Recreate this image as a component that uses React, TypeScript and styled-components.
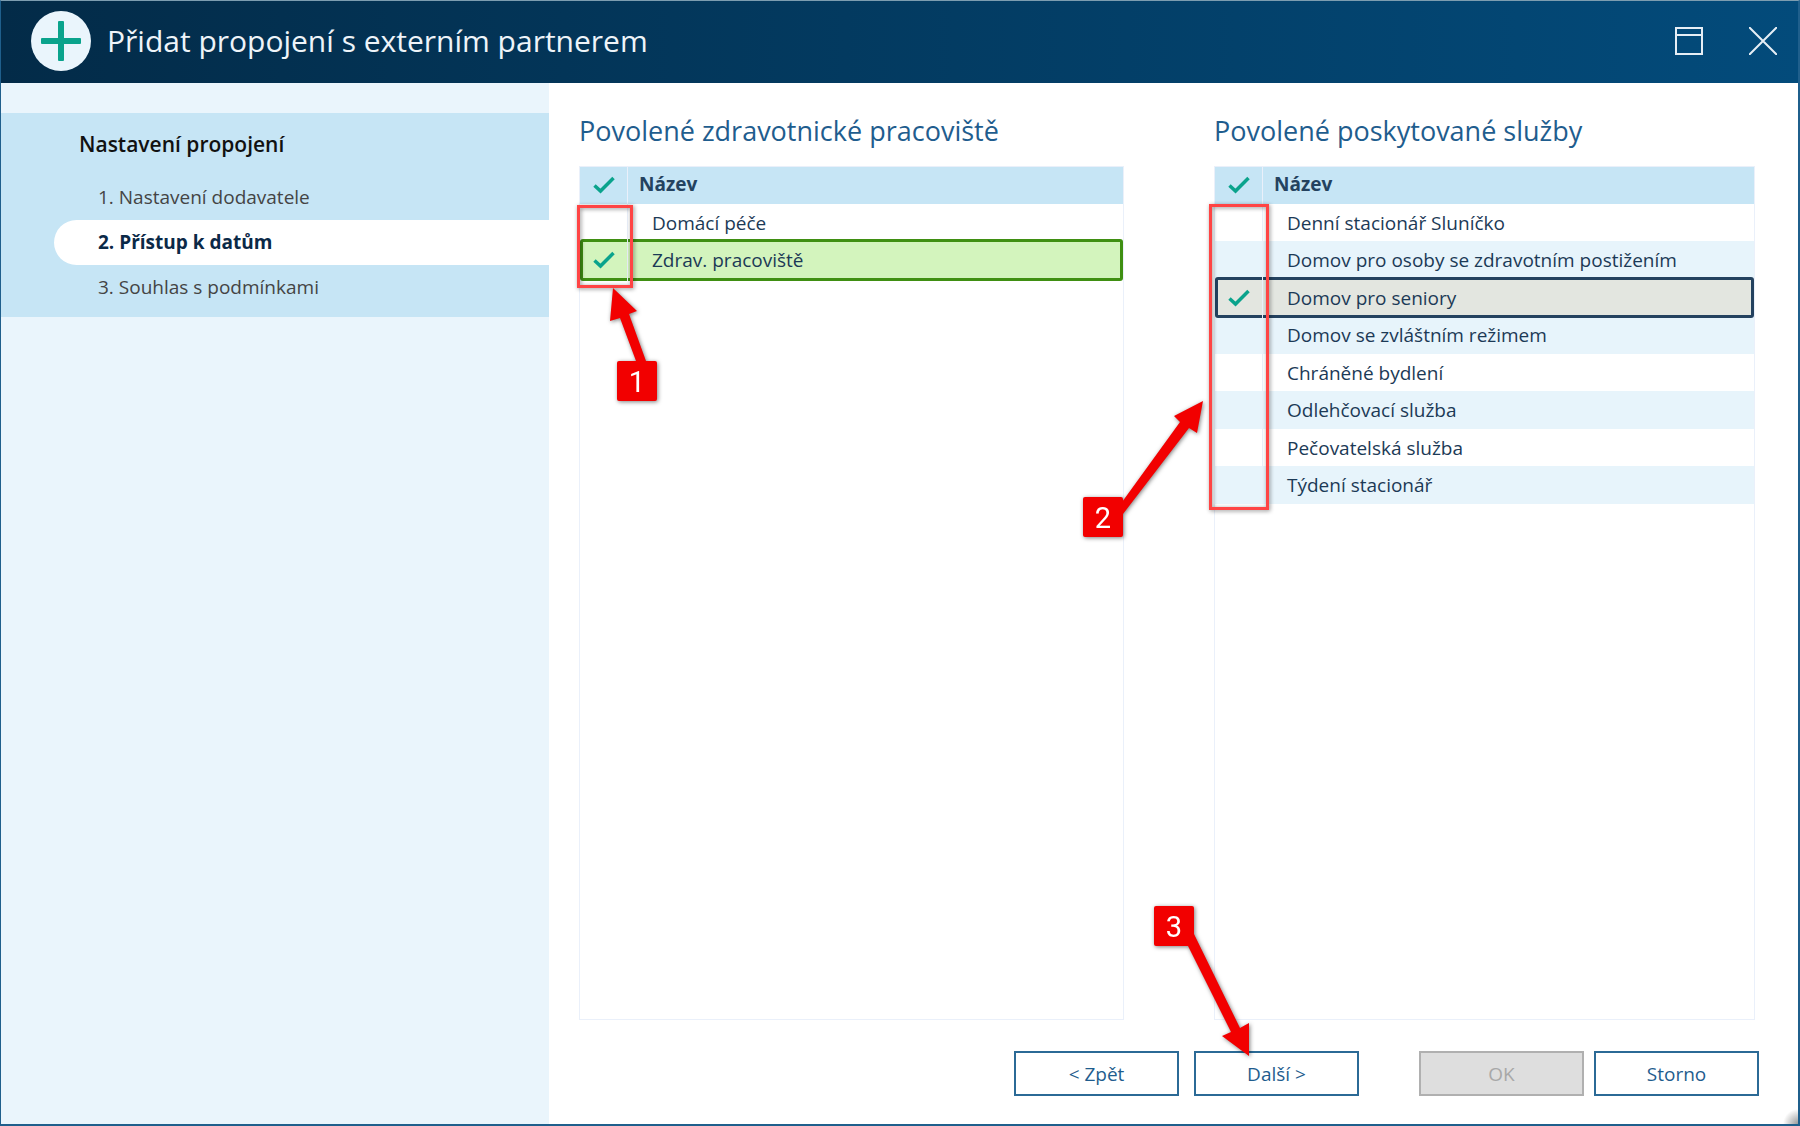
import React, { useState } from "react";
import styled, { createGlobalStyle, css } from "styled-components";

const GlobalStyle = createGlobalStyle`
  *, *::before, *::after { box-sizing: border-box; }
  body {
    margin: 0;
    background: #ffffff;
    font-family: "Open Sans", "Noto Sans", sans-serif;
    font-size: 19px;
    line-height: 24px;
    color: #1c3a56;
  }
  button, input { font: inherit; }
`;

const Dialog = styled.div`
  position: relative;
  display: flex;
  flex-direction: column;
  min-height: 100vh;
  border: 1px solid #1f5f8c;
  border-top-color: #7d9db0;
  border-right-width: 2px;
  border-bottom-width: 2px;
`;

const TitleBar = styled.header`
  display: flex;
  align-items: center;
  height: 82px;
  padding: 0 17px 2px 30px;
  gap: 16px;
  background: linear-gradient(90deg, #032b48, #034b7b);
  color: #eef4f9;
`;

const Title = styled.h1`
  flex: 1;
  margin: 0;
  font-size: 30px;
  line-height: 38px;
  font-weight: 400;
`;

const WindowButton = styled.button`
  display: flex;
  padding: 4px;
  margin-left: 22px;
  border: 0;
  background: none;
  color: #e6eef5;
  cursor: pointer;
`;

const Body = styled.div`
  flex: 1;
  display: flex;
`;

const Sidebar = styled.nav`
  flex: 0 0 548px;
  padding-top: 30px;
  background: #eaf5fc;
`;

const StepGroup = styled.section`
  padding: 17px 0 7px;
  background: #c6e5f5;
`;

const StepTitle = styled.h2`
  margin: 0 0 17px;
  padding-left: 78px;
  font-size: 21px;
  line-height: 28px;
  font-weight: 600;
  color: #111111;
`;

const StepList = styled.ol`
  margin: 0;
  padding: 0 0 0 53px;
  list-style: none;
`;

const StepLink = styled.a<{ $active?: boolean }>`
  display: block;
  padding-left: 44px;
  line-height: 45px;
  border-radius: 23px 0 0 23px;
  color: #444444;
  text-decoration: none;
  ${(p) =>
    p.$active &&
    css`
      background: #ffffff;
      color: #0b2947;
      font-weight: 700;
    `}
`;

const Main = styled.main`
  flex: 1;
  min-width: 0;
  display: flex;
  flex-direction: column;
  padding: 30px 39px 28px 30px;
`;

const Columns = styled.div`
  flex: 1;
  display: grid;
  grid-template-columns: 545fr 541fr;
  gap: 90px;
  padding-right: 4px;
`;

const Column = styled.section`
  display: flex;
  flex-direction: column;
`;

const ColumnTitle = styled.h2`
  margin: 0 0 17px;
  font-size: 27px;
  line-height: 36px;
  font-weight: 400;
  color: #1f5d8e;
`;

const Frame = styled.div`
  position: relative;
  flex: 1;
  border: 1px solid #eaf0fa;
`;

const Table = styled.table`
  width: 100%;
  border-collapse: separate;
  border-spacing: 0;
  table-layout: fixed;
`;

const HeadCell = styled.th<{ $check?: boolean }>`
  height: 37px;
  padding: ${(p) => (p.$check ? "0 0 4px 1px" : "0 11px 3px")};
  width: ${(p) => (p.$check ? "48px" : "auto")};
  border-right: ${(p) => (p.$check ? "1px solid #eaf0fa" : "0")};
  background: #c6e5f5;
  text-align: ${(p) => (p.$check ? "center" : "left")};
  font-weight: 700;
  color: #24425f;
`;

type Tone = "green" | "grey";
const tones = {
  green: { line: "#3f8f12", fill: "#d3f4bd" },
  grey: { line: "#24425f", fill: "#e3e6e0" },
};

const CheckCell = styled.td`
  padding: 0 0 0 1px;
  border-right: 1px solid #eaf0fa;
  text-align: center;
`;

const NameCell = styled.td`
  padding: 0 10px 0 24px;
  white-space: nowrap;
`;

const Row = styled.tr<{ $tone?: Tone }>`
  position: relative;
  height: 37px;
  background: #ffffff;
  &:nth-child(even) {
    height: 38px;
    background: #e7f4fb;
  }
  ${(p) =>
    p.$tone &&
    css`
      z-index: 1;
      && { background: ${tones[p.$tone].fill}; }
      ${NameCell}::after {
        content: "";
        position: absolute;
        inset: -2px 0;
        border: 3px solid ${tones[p.$tone].line};
        border-radius: 3px;
        pointer-events: none;
      }
      ${CheckCell}::after {
        content: "";
        position: absolute;
        z-index: 1;
        inset: -2px auto -2px 47px;
        width: 1px;
        background: #eaf0fa;
      }
    `}
`;

const CheckLabel = styled.label`
  position: relative;
  display: flex;
  align-items: center;
  justify-content: center;
  height: 30px;
  cursor: pointer;
`;

const CheckInput = styled.input`
  position: absolute;
  inset: 0;
  width: 100%;
  height: 100%;
  margin: 0;
  opacity: 0;
  cursor: pointer;
`;

const CheckMark = styled.svg`
  vertical-align: middle;
`;

const Footer = styled.footer`
  display: flex;
  justify-content: flex-end;
  gap: 10px;
  margin-top: 31px;
`;

const FooterGroup = styled.div`
  display: flex;
  gap: 15px;
  margin-right: 50px;
`;

const Button = styled.button`
  position: relative;
  width: 165px;
  height: 45px;
  padding: 0;
  border: 2px solid #2b6a96;
  background: #ffffff;
  color: #1f5d8e;
  cursor: pointer;
  &:disabled {
    border-color: #b0b0b0;
    background: #dedede;
    color: #a8a8a8;
  }
`;

const ResizeGrip = styled.div`
  position: absolute;
  right: 0;
  bottom: 0;
  width: 16px;
  height: 16px;
  background: radial-gradient(circle at 100% 100%, #9a9a9a, #ffffff 15px);
`;

/* Callouts lie over the content they point at. */
const Highlight = styled.div<{ $width: number; $height: number; $top: number; $left: number }>`
  position: absolute;
  z-index: 2;
  top: ${(p) => p.$top}px;
  left: ${(p) => p.$left}px;
  width: ${(p) => p.$width}px;
  height: ${(p) => p.$height}px;
  border: 3px solid #ff4444;
  filter: drop-shadow(1px 1px 2px rgba(0, 0, 0, 0.45));
  pointer-events: none;
`;

const Marker = styled.div<{ $top: number; $left: number }>`
  position: absolute;
  z-index: 3;
  top: ${(p) => p.$top}px;
  left: ${(p) => p.$left}px;
  width: 40px;
  height: 40px;
  filter: drop-shadow(1px 1px 2px rgba(0, 0, 0, 0.5));
  pointer-events: none;
`;

const MarkerNumber = styled.span`
  position: relative;
  display: block;
  border-radius: 2px;
  background: #f20000;
  color: #ffffff;
  font-family: Roboto, "Liberation Sans", sans-serif;
  font-size: 29px;
  line-height: 42px;
  height: 40px;
  text-align: center;
`;

const ArrowSvg = styled.svg`
  position: absolute;
  top: 0;
  left: 0;
  overflow: visible;
`;

function Callout({ n, top, left, arrow }: { n: number; top: number; left: number; arrow: string }) {
  return (
    <Marker $top={top} $left={left}>
      <ArrowSvg width="40" height="40" aria-hidden="true">
        <polygon points={arrow} fill="#f20000" />
      </ArrowSvg>
      <MarkerNumber>{n}</MarkerNumber>
    </Marker>
  );
}

function CheckIcon() {
  return (
    <CheckMark width="22" height="18" viewBox="0 0 22 18" aria-hidden="true">
      <path d="M1.500 9.500L7.500 15L20.500 2" fill="none" stroke="#0aa38c" strokeWidth="3.500" />
    </CheckMark>
  );
}

type Item = { name: string; tone?: Tone };

function CheckTable({ items }: { items: Item[] }) {
  const [checked, setChecked] = useState(() => items.map((i) => Boolean(i.tone)));
  const toggle = (at: number) => setChecked((list) => list.map((v, i) => (i === at ? !v : v)));
  return (
    <Table>
      <thead>
        <tr>
          <HeadCell $check scope="col"><CheckIcon /></HeadCell>
          <HeadCell scope="col">Název</HeadCell>
        </tr>
      </thead>
      <tbody>
        {items.map((item, i) => (
          <Row key={item.name} $tone={item.tone}>
            <CheckCell>
              <CheckLabel>
                <CheckInput type="checkbox" aria-label={item.name} checked={checked[i]} onChange={() => toggle(i)} />
                {checked[i] && <CheckIcon />}
              </CheckLabel>
            </CheckCell>
            <NameCell>{item.name}</NameCell>
          </Row>
        ))}
      </tbody>
    </Table>
  );
}

const workplaces: Item[] = [{ name: "Domácí péče" }, { name: "Zdrav. pracoviště", tone: "green" }];

const services: Item[] = [
  { name: "Denní stacionář Sluníčko" },
  { name: "Domov pro osoby se zdravotním postižením" },
  { name: "Domov pro seniory", tone: "grey" },
  { name: "Domov se zvláštním režimem" },
  { name: "Chráněné bydlení" },
  { name: "Odlehčovací služba" },
  { name: "Pečovatelská služba" },
  { name: "Týdení stacionář" },
];

const steps = ["1. Nastavení dodavatele", "2. Přístup k datům", "3. Souhlas s podmínkami"];

export default function App() {
  return (
    <>
      <GlobalStyle />
      <Dialog>
        <TitleBar>
          <svg width="60" height="60" viewBox="0 0 60 60" aria-hidden="true">
            <circle cx="30" cy="30" r="30" fill="#eaf5fc" />
            <rect x="10" y="27" width="40" height="6" rx="1" fill="#0aa38c" />
            <rect x="27" y="10" width="6" height="40" rx="1" fill="#0aa38c" />
          </svg>
          <Title>Přidat propojení s externím partnerem</Title>
          <WindowButton aria-label="Maximalizovat">
            <svg width="28" height="28" viewBox="0 0 28 28" fill="none" stroke="currentColor" strokeWidth="2">
              <rect x="1" y="1" width="26" height="26" />
              <path d="M1 8H27" />
            </svg>
          </WindowButton>
          <WindowButton aria-label="Zavřít">
            <svg width="28" height="28" viewBox="0 0 28 28" fill="none" stroke="currentColor" strokeWidth="2">
              <path d="M0 0L28 28M28 0L0 28" />
            </svg>
          </WindowButton>
        </TitleBar>
        <Body>
          <Sidebar>
            <StepGroup>
              <StepTitle>Nastavení propojení</StepTitle>
              <StepList>
                {steps.map((step, i) => (
                  <li key={step}>
                    <StepLink href={`#krok-${i + 1}`} $active={i === 1}>{step}</StepLink>
                  </li>
                ))}
              </StepList>
            </StepGroup>
          </Sidebar>
          <Main>
            <Columns>
              <Column>
                <ColumnTitle>Povolené zdravotnické pracoviště</ColumnTitle>
                <Frame>
                  <CheckTable items={workplaces} />
                  <Highlight $top={38} $left={-3} $width={56} $height={83} />
                  <Callout n={1} top={194} left={37} arrow="-4,-73 20,-50 12,-47 29,0 29,6 19,6 19,0 3,-43 -7,-40" />
                </Frame>
              </Column>
              <Column>
                <ColumnTitle>Povolené poskytované služby</ColumnTitle>
                <Frame>
                  <CheckTable items={services} />
                  <Highlight $top={37} $left={-6} $width={60} $height={306} />
                  <Callout n={2} top={330} left={-132} arrow="120,-96 114,-64 106,-69 40,17 34,17 34,12 97,-75 91,-81" />
                </Frame>
              </Column>
            </Columns>
            <Footer>
              <FooterGroup>
                <Button type="button">&lt; Zpět</Button>
                <Button type="button">
                  Další &gt;
                  <Callout n={3} top={-147} left={-42} arrow="95,150 95,117 86,122 40,28 34,28 34,40 77,126 68,130" />
                </Button>
              </FooterGroup>
              <Button type="button" disabled>OK</Button>
              <Button type="button">Storno</Button>
            </Footer>
          </Main>
        </Body>
        <ResizeGrip />
      </Dialog>
    </>
  );
}
